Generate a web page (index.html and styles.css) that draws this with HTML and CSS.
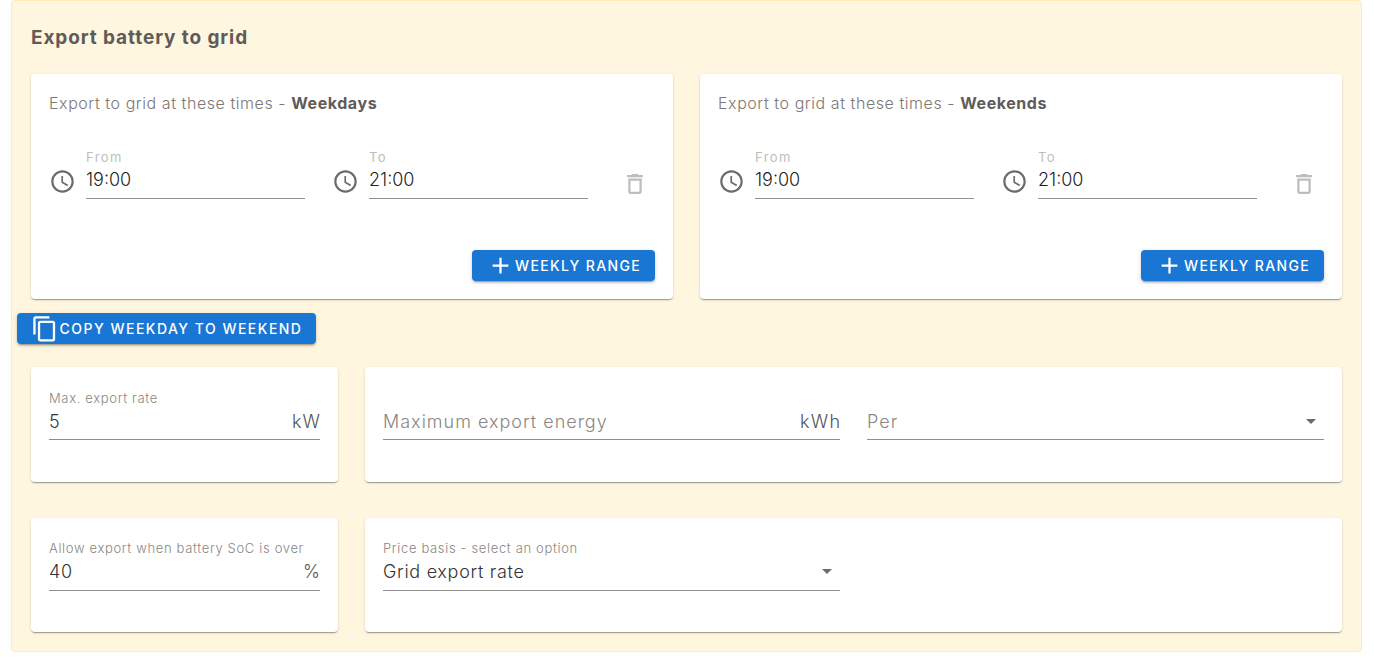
FILE: index.html
```html
<!DOCTYPE html>
<html lang="en">
<head>
<meta charset="utf-8">
<title>Export battery to grid</title>
<link rel="stylesheet" href="styles.css">
</head>
<body>
<section class="panel">
  <h2 class="title">Export battery to grid</h2>
  <div class="times">
    <div class="card time-card">
      <p class="card-head">Export to grid at these times - <b>Weekdays</b></p>
      <div class="range">
        <div class="time-field">
          <svg class="clock" viewBox="0 0 24 24"><path d="M11.99 2C6.47 2 2 6.48 2 12s4.47 10 9.99 10C17.52 22 22 17.52 22 12S17.52 2 11.99 2zM12 20c-4.42 0-8-3.58-8-8s3.58-8 8-8 8 3.58 8 8-3.58 8-8 8zm.5-13H11v6l5.25 3.15.75-1.23-4.5-2.67z"/></svg>
          <div class="time-input"><span class="time-label">From</span><span class="time-value">19:00</span></div>
        </div>
        <div class="time-field">
          <svg class="clock" viewBox="0 0 24 24"><path d="M11.99 2C6.47 2 2 6.48 2 12s4.47 10 9.99 10C17.52 22 22 17.52 22 12S17.52 2 11.99 2zM12 20c-4.42 0-8-3.58-8-8s3.58-8 8-8 8 3.58 8 8-3.58 8-8 8zm.5-13H11v6l5.25 3.15.75-1.23-4.5-2.67z"/></svg>
          <div class="time-input"><span class="time-label">To</span><span class="time-value">21:00</span></div>
        </div>
        <svg class="trash" viewBox="0 0 24 24"><path d="M6 19c0 1.100.9 2 2 2h8c1.100 0 2-.9 2-2V7H6v12zM8 9h8v10H8V9zm7.500-5l-1-1h-5l-1 1H5v2h14V4z"/></svg>
      </div>
      <div class="actions">
        <button class="btn" type="button"><svg class="plus" viewBox="0 0 24 24"><path d="M19 13h-6v6h-2v-6H5v-2h6V5h2v6h6v2z"/></svg>Weekly range</button>
      </div>
    </div>
    <div class="card time-card">
      <p class="card-head">Export to grid at these times - <b>Weekends</b></p>
      <div class="range">
        <div class="time-field">
          <svg class="clock" viewBox="0 0 24 24"><path d="M11.99 2C6.47 2 2 6.48 2 12s4.47 10 9.99 10C17.52 22 22 17.52 22 12S17.52 2 11.99 2zM12 20c-4.42 0-8-3.58-8-8s3.58-8 8-8 8 3.58 8 8-3.58 8-8 8zm.5-13H11v6l5.25 3.15.75-1.23-4.5-2.67z"/></svg>
          <div class="time-input"><span class="time-label">From</span><span class="time-value">19:00</span></div>
        </div>
        <div class="time-field">
          <svg class="clock" viewBox="0 0 24 24"><path d="M11.99 2C6.47 2 2 6.48 2 12s4.47 10 9.99 10C17.52 22 22 17.52 22 12S17.52 2 11.99 2zM12 20c-4.42 0-8-3.58-8-8s3.58-8 8-8 8 3.58 8 8-3.58 8-8 8zm.5-13H11v6l5.25 3.15.75-1.23-4.5-2.67z"/></svg>
          <div class="time-input"><span class="time-label">To</span><span class="time-value">21:00</span></div>
        </div>
        <svg class="trash" viewBox="0 0 24 24"><path d="M6 19c0 1.100.9 2 2 2h8c1.100 0 2-.9 2-2V7H6v12zM8 9h8v10H8V9zm7.500-5l-1-1h-5l-1 1H5v2h14V4z"/></svg>
      </div>
      <div class="actions">
        <button class="btn" type="button"><svg class="plus" viewBox="0 0 24 24"><path d="M19 13h-6v6h-2v-6H5v-2h6V5h2v6h6v2z"/></svg>Weekly range</button>
      </div>
    </div>
  </div>
  <button class="btn btn-copy" type="button"><svg class="copy" viewBox="0 0 24 24"><path d="M16 1H4c-1.100 0-2 .9-2 2v14h2V3h12V1zm3 4H8c-1.100 0-2 .9-2 2v14c0 1.100.9 2 2 2h11c1.100 0 2-.9 2-2V7c0-1.100-.9-2-2-2zm0 16H8V7h11v14z"/></svg>Copy weekday to weekend</button>
  <div class="settings first">
    <div class="card field-card">
      <div class="field">
        <span class="field-label">Max. export rate</span>
        <div class="field-line"><span class="value">5</span><span class="unit">kW</span></div>
      </div>
    </div>
    <div class="card field-card split">
      <div class="field">
        <div class="field-line"><span class="placeholder">Maximum export energy</span><span class="unit">kWh</span></div>
      </div>
      <div class="field">
        <div class="field-line"><span class="placeholder">Per</span><span class="caret"></span></div>
      </div>
    </div>
  </div>
  <div class="settings second">
    <div class="card field-card">
      <div class="field">
        <span class="field-label">Allow export when battery SoC is over</span>
        <div class="field-line"><span class="value">40</span><span class="unit">%</span></div>
      </div>
    </div>
    <div class="card field-card split">
      <div class="field">
        <span class="field-label">Price basis - select an option</span>
        <div class="field-line"><span class="value">Grid export rate</span><span class="caret"></span></div>
      </div>
      <div class="field-empty"></div>
    </div>
  </div>
</section>
</body>
</html>
```
FILE: styles.css
```css
* { box-sizing: border-box; }
html, body { margin: 0; padding: 0; background: #fff; }
body {
  padding: 0 12px 0 11px;
  height: 662px;
  overflow: hidden;
  font-family: "Inter", "Open Sans", sans-serif;
  color: #5f5b57;
}
.panel {
  height: 652px;
  background: #fef6de;
  border: 1px solid #ffecb3;
  border-radius: 4px;
  padding: 25px 19px 0 19px;
}
.title {
  margin: 0;
  font-size: 19px;
  line-height: 24px;
  font-weight: 700;
  letter-spacing: .9px;
  color: #5f5b57;
}
.times {
  display: grid;
  grid-template-columns: 1fr 1fr;
  gap: 27px;
  margin-top: 24px;
}
.card {
  background: #fff;
  border-radius: 4px;
  box-shadow: 0 2px 1px -1px rgba(0,0,0,.2), 0 1px 1px 0 rgba(0,0,0,.14), 0 1px 3px 0 rgba(0,0,0,.12);
}
.time-card { height: 225px; padding: 18px; display: flex; flex-direction: column; }
.card-head { margin: 0; font-size: 16px; line-height: 22px; color: #7c7874; font-weight: 300; letter-spacing: .56px; }
.card-head b { font-weight: 700; color: #5f5b57; }
.range { display: flex; align-items: flex-start; margin-top: 36px; }
.time-field { display: flex; align-items: flex-end; width: 283px; padding-right: 27px; flex: none; }
.time-field + .time-field { width: 255.500px; padding-right: 0; margin-right: 30.500px; }
.clock { width: 27px; height: 27px; flex: none; fill: #6b6b6b; margin: 0 10px 4px 0; }
.time-input { flex: 1; display: flex; flex-direction: column; border-bottom: 1px solid #8f8f8f; height: 49px; }
.time-label { font-size: 13px; line-height: 14px; color: #bdbdbd; letter-spacing: 1.4px; }
.time-value { font-size: 18px; line-height: 32px; color: #1f1f1f; font-weight: 300; }
.trash { width: 24px; height: 24px; fill: #bdbdbd; flex: none; margin-top: 22px; margin-left: 5px; transform: scale(1.12); }
.actions { margin-top: auto; display: flex; justify-content: flex-end; }
.btn {
  display: inline-flex;
  align-items: center;
  border: 0;
  height: 31px;
  border-radius: 4px;
  background: #1976d2;
  color: #fff;
  font-family: inherit;
  font-size: 14px;
  font-weight: 500;
  letter-spacing: 1.35px;
  text-transform: uppercase;
  padding: 0 14px 0 15px;
  box-shadow: 0 3px 1px -2px rgba(0,0,0,.2), 0 2px 2px 0 rgba(0,0,0,.14), 0 1px 5px 0 rgba(0,0,0,.12);
}
.plus { width: 27px; height: 27px; fill: #fff; margin-right: 1px; flex: none; }
.btn-copy { display: flex; width: 299px; margin: 14px 0 0 -14px; padding: 0 0 0 14px; letter-spacing: 1.48px; }
.copy { width: 27.600px; height: 27.600px; fill: #fff; flex: none; margin-right: 1px; }
.settings { display: grid; grid-template-columns: 307px 1fr; gap: 27px; }
.settings.first { margin-top: 23px; }
.settings.second { margin-top: 36px; }
.field-card { padding: 24px 18px 0; height: 115px; }
.settings.second .field-card { height: 114px; }
.split { display: grid; grid-template-columns: 1fr 1fr; gap: 27px; }
.field { display: flex; flex-direction: column; justify-content: flex-end; height: 49px; border-bottom: 1px solid #8f8f8f; }
.field-label { font-size: 13px; line-height: 15px; color: #8a8683; letter-spacing: .66px; margin-bottom: 4px; font-weight: 300; }
.second .field-label { margin-bottom: 5px; }
.field-line { display: flex; justify-content: space-between; align-items: center; height: 29px; padding-bottom: 7px; }
.second .field-line { padding-bottom: 8px; }
.value { font-size: 18px; color: #333; font-weight: 300; letter-spacing: .7px; }
.unit { font-size: 18px; color: #555; font-weight: 300; letter-spacing: 1.2px; margin-right: -1.200px; }
.placeholder { font-size: 18px; color: #8a8683; font-weight: 300; letter-spacing: 1px; }
.caret { width: 0; height: 0; border-left: 5px solid transparent; border-right: 5px solid transparent; border-top: 5px solid #6b6b6b; margin-right: 8px; }
```
